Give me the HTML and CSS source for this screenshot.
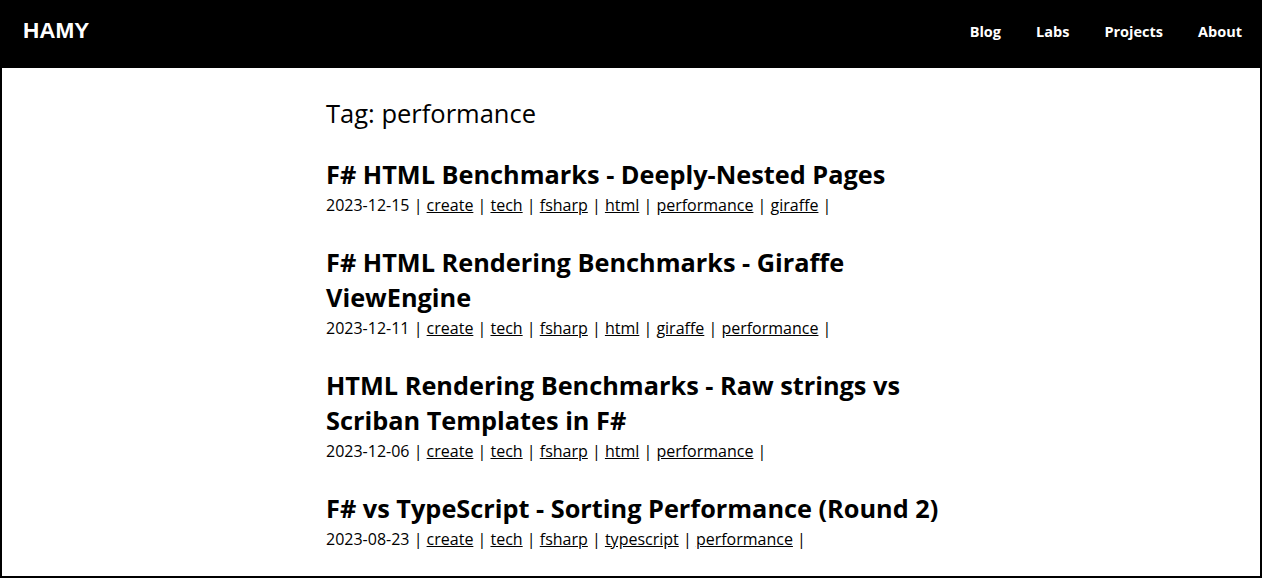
FILE: index.html
```html
<!DOCTYPE html>
<html lang="en">
<head>
  <meta charset="UTF-8" />
  <meta name="viewport" content="width=device-width, initial-scale=1.0" />
  <title>Tag: performance - HAMY</title>
  <link rel="stylesheet" href="styles.css">
</head>
<body>
  <header class="site-header">
    <a class="brand" href="#">HAMY</a>
    <nav class="nav">
      <a href="#">Blog</a>
      <a href="#">Labs</a>
      <a href="#">Projects</a>
      <a href="#">About</a>
    </nav>
  </header>
  <main class="content">
    <h1 class="tag-title">Tag: performance</h1>
    <div class="post">
      <h2 class="post-title">F# HTML Benchmarks - Deeply-Nested Pages</h2>
      <div class="post-meta">2023-12-15 | <a href="#">create</a> | <a href="#">tech</a> | <a href="#">fsharp</a> | <a href="#">html</a> | <a href="#">performance</a> | <a href="#">giraffe</a> |</div>
    </div>
    <div class="post">
      <h2 class="post-title">F# HTML Rendering Benchmarks - Giraffe ViewEngine</h2>
      <div class="post-meta">2023-12-11 | <a href="#">create</a> | <a href="#">tech</a> | <a href="#">fsharp</a> | <a href="#">html</a> | <a href="#">giraffe</a> | <a href="#">performance</a> |</div>
    </div>
    <div class="post">
      <h2 class="post-title">HTML Rendering Benchmarks - Raw strings vs Scriban Templates in F#</h2>
      <div class="post-meta">2023-12-06 | <a href="#">create</a> | <a href="#">tech</a> | <a href="#">fsharp</a> | <a href="#">html</a> | <a href="#">performance</a> |</div>
    </div>
    <div class="post">
      <h2 class="post-title">F# vs TypeScript - Sorting Performance (Round 2)</h2>
      <div class="post-meta">2023-08-23 | <a href="#">create</a> | <a href="#">tech</a> | <a href="#">fsharp</a> | <a href="#">typescript</a> | <a href="#">performance</a> |</div>
    </div>
  </main>
</body>
</html>
```
FILE: styles.css
```css
html, body {
  height: 100%;
}
body {
  margin: 0;
  box-sizing: border-box;
  border: 2px solid #000;
  overflow: hidden;
  font-family: "Open Sans", "Noto Sans", sans-serif;
  color: #000;
  background: #fff;
}
.site-header {
  height: 66px;
  background: #000;
  display: flex;
  align-items: center;
  justify-content: space-between;
  padding: 0 18px 8px 21px;
  box-sizing: border-box;
}
.brand {
  color: #fff;
  text-decoration: none;
  font-family: "Liberation Sans", Arial, sans-serif;
  font-weight: bold;
  font-size: 22.5px;
}
.nav {
  display: flex;
  gap: 35px;
}
.nav a {
  color: #fff;
  text-decoration: none;
  font-weight: bold;
  font-size: 14.5px;
}
.content {
  width: 640px;
  margin-left: 324px;
  padding-top: 28px;
}
.tag-title {
  font-size: 25.5px;
  font-weight: normal;
  margin: 0 0 26px;
  line-height: 35px;
}
.post {
  margin-bottom: 27px;
}
.post-title {
  font-size: 25.3px;
  font-weight: bold;
  line-height: 35px;
  margin: 0;
}
.post-meta {
  font-size: 16px;
  line-height: 26px;
}
.post-meta a {
  color: #000;
}
```
